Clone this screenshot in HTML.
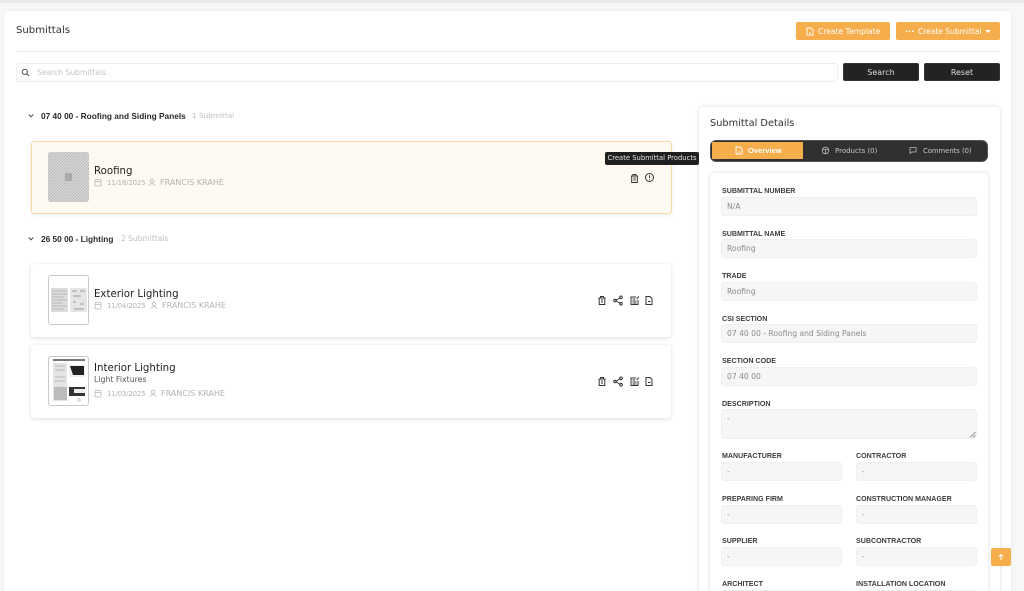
<!DOCTYPE html>
<html><head><meta charset="utf-8"><style>
*{box-sizing:border-box}
html{margin:0;padding:0;width:1024px;height:591px;overflow:hidden}
body{margin:0;padding:0;width:1024px;height:591px;overflow:hidden;background:#f6f7f7;position:relative;font-family:"DejaVu Sans","Liberation Sans",sans-serif;color:#222}
#root{position:absolute;left:0;top:0;width:1024px;height:591px;overflow:hidden;filter:blur(.25px)}
.a{position:absolute}
.t{position:absolute;white-space:nowrap;line-height:12px;height:12px}
.btn{position:absolute;background:#f6ad4b;border-radius:2px;height:18px;top:22px}
.dk{position:absolute;background:#232323;border-radius:2px;height:18px;top:63px;width:76px;color:#ddd;font-size:8px;line-height:18px;text-align:center;border:1px solid #333}
.card{position:absolute;left:31px;width:640px;height:73px;background:#fff;border-radius:3px;box-shadow:0 1px 5px rgba(0,0,0,.14)}
.th{position:absolute;left:48px;width:41px;height:50px;border:1px solid #c9c9c9;border-radius:3px;background:#fff;overflow:hidden}
.nm{font-size:10.2px;color:#222}
.mt{font-size:8px;color:#b4b4b4}
.dt{font-size:7px;color:#b4b4b4}
.hd{font-family:"Liberation Sans",sans-serif;font-size:8.3px;font-weight:bold;color:#2a2a2a}
.lb{font-family:"Liberation Sans",sans-serif;font-size:7.1px;font-weight:bold;color:#3d3d3d}
.in{position:absolute;background:#f5f6f6;border:1px solid #eef0f0;border-radius:3px;height:19px;width:256px;left:721px;font-size:7.6px;color:#8a8a8a;line-height:17px;padding-left:5px}
.h{width:121px}.r{left:856px}
svg{position:absolute;fill:none}
</style></head><body><div id="root">
<div class="a" style="left:0;top:0;width:1024px;height:3px;background:#e9eaea"></div>
<div class="a" style="left:4px;top:11px;width:1007px;height:580px;background:#fff;border-radius:4px 4px 0 0;box-shadow:0 0 4px rgba(0,0,0,.06)"></div>

<div class="t" style="left:16px;top:25px;font-size:10.1px;color:#333">Submittals</div>

<div class="btn" style="left:796px;width:94px"></div>
<svg class="a" style="left:806px;top:27px" width="8" height="9" viewBox="0 0 8 9" stroke="#fff" stroke-width=".9"><path d="M1 1h4l2 2v5H1zM3 6h2"/></svg>
<div class="t" style="left:818px;top:26px;font-size:7.6px;color:#fff">Create Template</div>
<div class="btn" style="left:896px;width:104px"></div>
<div class="t" style="left:905px;top:26px;font-size:8px;color:#fff;font-weight:bold">&middot;&middot;&middot;</div>
<div class="t" style="left:918px;top:26px;font-size:7.5px;color:#fff">Create Submittal</div>
<div class="a" style="left:985px;top:30px;border:3px solid transparent;border-top-color:#fff"></div>

<div class="a" style="left:16px;top:51px;width:984px;height:1px;background:#eeeeee"></div>

<div class="a" style="left:16px;top:63px;width:822px;height:19px;border:1px solid #eeeeee;border-radius:3px;background:#fff"></div>
<svg class="a" style="left:21px;top:68px" width="9" height="9" viewBox="0 0 9 9" stroke="#555" stroke-width="1"><circle cx="3.800" cy="3.800" r="2.600"/><path d="M5.800 5.800L8 8"/></svg>
<div class="t" style="left:37px;top:67px;font-size:7.6px;color:#c4c4c4">Search Submittals</div>
<div class="dk" style="left:843px">Search</div>
<div class="dk" style="left:924px">Reset</div>

<svg class="a" style="left:28px;top:113px" width="6" height="6" viewBox="0 0 6 6" stroke="#444" stroke-width="1"><path d="M.8 1.500L3 3.800l2.200-2.300"/></svg>
<div class="t hd" style="left:41px;top:110px">07 40 00 - Roofing and Siding Panels</div>
<div class="t" style="left:192px;top:110px;font-size:7.3px;color:#c0c0c0">1 Submittal</div>

<div class="card" style="top:141px;height:73px;width:641px;background:#fef9f1;border:1px solid #f9d9a6;box-shadow:0 1px 4px rgba(0,0,0,.08)"></div>
<div class="th" style="top:152px;background:#c9c9c9;border:0">
<svg width="41" height="50" style="left:0;top:0"><defs><pattern id="p" width="3" height="3" patternUnits="userSpaceOnUse"><rect width="3" height="3" fill="#d8d8d8"/><path d="M0 3L3 0" stroke="#b4b4b4" stroke-width=".8"/></pattern></defs><rect width="41" height="50" fill="url(#p)"/><rect x="17" y="21" width="7" height="8" fill="#aaa"/></svg></div>
<div class="t nm" style="left:94px;top:166px">Roofing</div>
<svg class="a" style="left:94px;top:178px" width="8" height="9" viewBox="0 0 8 9" stroke="#b8b8b8" stroke-width=".8"><rect x="1" y="1.500" width="6" height="6.500" rx="1"/><path d="M1 3.500h6"/></svg>
<div class="t dt" style="left:107px;top:177px;letter-spacing:-.2px">11/18/2025</div>
<svg class="a" style="left:148px;top:178px" width="8" height="9" viewBox="0 0 8 9" stroke="#b8b8b8" stroke-width=".8"><circle cx="4" cy="3" r="1.800"/><path d="M1 8c0-3 6-3 6 0"/></svg>
<div class="t mt" style="left:160px;top:177px">FRANCIS KRAHE</div>

<svg class="a" style="left:629px;top:173px" width="11" height="11" viewBox="0 0 11 11" stroke="#333" stroke-width="1"><path d="M2 3h7M4 3V1.500h3V3M2.700 3v6.500h5.600V3M4.300 5h2.400M4.300 7h2.400"/></svg>
<svg class="a" style="left:644px;top:172px" width="11" height="11" viewBox="0 0 11 11" stroke="#333" stroke-width="1"><circle cx="5.500" cy="5.500" r="4"/><path d="M5.500 3.200v2.800M5.500 7v.9"/></svg>

<div class="a" style="left:605px;top:152px;width:94px;height:13px;background:#1f1f1f;border-radius:2px;color:#e6e6e6;font-size:6.8px;line-height:13px;text-align:center;white-space:nowrap;z-index:3">Create Submittal Products</div>

<svg class="a" style="left:28px;top:236px" width="6" height="6" viewBox="0 0 6 6" stroke="#444" stroke-width="1"><path d="M.8 1.500L3 3.800l2.200-2.300"/></svg>
<div class="t hd" style="left:41px;top:233px">26 50 00 - Lighting</div>
<div class="t" style="left:121px;top:233px;font-size:7.5px;color:#c0c0c0">2 Submittals</div>

<div class="card" style="top:264px"></div>
<div class="th" style="top:275px">
<svg width="39" height="48" style="left:0;top:0"><rect x="2" y="12" width="17" height="24" fill="#dcdcdc"/><rect x="21" y="12" width="17" height="24" fill="#e6e6e6"/><path d="M3 15h15M3 18h15M3 21h12M3 24h15M3 27h10M3 30h14M3 33h12" stroke="#aaa" stroke-width=".7"/><path d="M23 15h5M31 15h5M24 20h8M24 26h3M31 28h4M25 33h10" stroke="#999" stroke-width="1"/></svg></div>
<div class="t nm" style="left:94px;top:289px">Exterior Lighting</div>
<svg class="a" style="left:94px;top:301px" width="8" height="9" viewBox="0 0 8 9" stroke="#b8b8b8" stroke-width=".8"><rect x="1" y="1.500" width="6" height="6.500" rx="1"/><path d="M1 3.500h6"/></svg>
<div class="t dt" style="left:107px;top:300px;letter-spacing:-.2px">11/04/2025</div>
<svg class="a" style="left:150px;top:301px" width="8" height="9" viewBox="0 0 8 9" stroke="#b8b8b8" stroke-width=".8"><circle cx="4" cy="3" r="1.800"/><path d="M1 8c0-3 6-3 6 0"/></svg>
<div class="t mt" style="left:162px;top:300px">FRANCIS KRAHE</div>

<div class="card" style="top:345px"></div>
<div class="th" style="top:356px">
<svg width="39" height="48" style="left:0;top:0"><rect x="4" y="2" width="32" height="2" fill="#777"/><rect x="4" y="6" width="14" height="38" fill="#e4e4e4"/><rect x="20" y="8" width="16" height="12" fill="#eee"/><path d="M21 9h14v9H24z" fill="#222"/><rect x="5" y="30" width="13" height="13" fill="#bbb"/><rect x="20" y="30" width="16" height="9" fill="#333"/><path d="M6 9h10M6 13h10M6 20h10M6 24h10" stroke="#aaa" stroke-width=".8"/><rect x="25" y="32" width="11" height="4" fill="#eee"/><circle cx="30" cy="43" r="2" fill="#ddd"/></svg></div>
<div class="t nm" style="left:94px;top:363px">Interior Lighting</div>
<div class="t" style="left:94px;top:374px;font-size:7.8px;color:#555">Light Fixtures</div>
<svg class="a" style="left:94px;top:389px" width="8" height="9" viewBox="0 0 8 9" stroke="#b8b8b8" stroke-width=".8"><rect x="1" y="1.500" width="6" height="6.500" rx="1"/><path d="M1 3.500h6"/></svg>
<div class="t dt" style="left:107px;top:388px;letter-spacing:-.2px">11/03/2025</div>
<svg class="a" style="left:149px;top:389px" width="8" height="9" viewBox="0 0 8 9" stroke="#b8b8b8" stroke-width=".8"><circle cx="4" cy="3" r="1.800"/><path d="M1 8c0-3 6-3 6 0"/></svg>
<div class="t mt" style="left:161px;top:388px">FRANCIS KRAHE</div>

<svg class="a" style="left:597px;top:295px" width="60" height="11" viewBox="0 0 60 11" stroke="#333" stroke-width="1"><path d="M1.500 3h7M3.500 3V1.500h3V3M2.200 3v6.500h5.600V3M4 5h2M4 7h2"/><path d="M18.500 5.500l5-3M18.500 5.500l5 3"/><circle cx="18" cy="5.500" r="1.300"/><circle cx="24" cy="2.300" r="1.300"/><circle cx="24" cy="8.700" r="1.300"/><path d="M39 2h-5v7.500h7V5M35.500 4h2.500M35.500 6h4M35.500 8h4M39.500 4l2.500-2.500"/><path d="M49 1.500h4l2 2v6h-6zM51 6.500h2.500"/></svg>
<svg class="a" style="left:597px;top:376px" width="60" height="11" viewBox="0 0 60 11" stroke="#333" stroke-width="1"><path d="M1.500 3h7M3.500 3V1.500h3V3M2.200 3v6.500h5.600V3M4 5h2M4 7h2"/><path d="M18.500 5.500l5-3M18.500 5.500l5 3"/><circle cx="18" cy="5.500" r="1.300"/><circle cx="24" cy="2.300" r="1.300"/><circle cx="24" cy="8.700" r="1.300"/><path d="M39 2h-5v7.500h7V5M35.500 4h2.500M35.500 6h4M35.500 8h4M39.500 4l2.500-2.500"/><path d="M49 1.500h4l2 2v6h-6zM51 6.500h2.500"/></svg>

<div class="a" style="left:699px;top:107px;width:301px;height:490px;background:#fff;border-radius:4px;box-shadow:0 0 4px rgba(0,0,0,.16)"></div>
<div class="t" style="left:710px;top:117px;font-size:9.800px;color:#333;line-height:13px">Submittal Details</div>
<div class="a" style="left:710px;top:140px;width:278px;height:22px;background:#303030;border:1px solid #555;border-radius:6px"></div>
<div class="a" style="left:712px;top:142px;width:91px;height:17px;background:#f6ad4b"></div>
<svg class="a" style="left:735px;top:146px" width="8" height="9" viewBox="0 0 8 9" stroke="#fff" stroke-width=".9"><path d="M1 1h4l2 2v5H1zM3 6h2"/></svg>
<div class="t" style="left:748px;top:145px;font-family:'Liberation Sans',sans-serif;font-size:7.6px;font-weight:bold;color:#fff">Overview</div>
<svg class="a" style="left:821px;top:146px" width="9" height="9" viewBox="0 0 9 9" stroke="#bbb" stroke-width=".8"><circle cx="4.500" cy="4.500" r="3.300"/><path d="M1.500 3.500h6M4.500 3.500v4"/></svg>
<div class="t" style="left:835px;top:145px;font-size:7px;color:#c8c8c8">Products (0)</div>
<svg class="a" style="left:909px;top:146px" width="8" height="9" viewBox="0 0 8 9" stroke="#bbb" stroke-width=".8"><path d="M1 1.500h6v4.500H2.500L1 7.500z"/></svg>
<div class="t" style="left:923px;top:145px;font-size:6.800px;color:#c8c8c8">Comments (0)</div>

<div class="a" style="left:710px;top:173px;width:278px;height:430px;background:#fff;border-radius:4px;box-shadow:0 0 4px rgba(0,0,0,.16)"></div>

<div class="t lb" style="left:722px;top:185px">SUBMITTAL NUMBER</div><div class="in" style="top:197px">N/A</div>
<div class="t lb" style="left:722px;top:228px">SUBMITTAL NAME</div><div class="in" style="top:239px">Roofing</div>
<div class="t lb" style="left:722px;top:270px">TRADE</div><div class="in" style="top:282px">Roofing</div>
<div class="t lb" style="left:722px;top:313px">CSI SECTION</div><div class="in" style="top:324px">07 40 00 - Roofing and Siding Panels</div>
<div class="t lb" style="left:722px;top:355px">SECTION CODE</div><div class="in" style="top:367px">07 40 00</div>
<div class="t lb" style="left:722px;top:398px">DESCRIPTION</div><div class="in" style="top:409px;height:30px">-</div>
<svg class="a" style="left:969px;top:431px" width="7" height="7" stroke="#777" stroke-width=".8"><path d="M1 6.500L6.500 1M4 6.500L6.500 4"/></svg>
<div class="t lb" style="left:722px;top:450px">MANUFACTURER</div><div class="in h" style="top:462px">-</div>
<div class="t lb" style="left:856px;top:450px">CONTRACTOR</div><div class="in h r" style="top:462px">-</div>
<div class="t lb" style="left:722px;top:493px">PREPARING FIRM</div><div class="in h" style="top:505px">-</div>
<div class="t lb" style="left:856px;top:493px">CONSTRUCTION MANAGER</div><div class="in h r" style="top:505px">-</div>
<div class="t lb" style="left:722px;top:535px">SUPPLIER</div><div class="in h" style="top:547px">-</div>
<div class="t lb" style="left:856px;top:535px">SUBCONTRACTOR</div><div class="in h r" style="top:547px">-</div>
<div class="t lb" style="left:722px;top:578px">ARCHITECT</div><div class="in h" style="top:590px">-</div>
<div class="t lb" style="left:856px;top:578px">INSTALLATION LOCATION</div><div class="in h r" style="top:590px">-</div>

<div class="a" style="left:991px;top:548px;width:20px;height:18px;background:#f6ad4b;border-radius:2px"></div>
<svg class="a" style="left:997px;top:553px" width="8" height="8" viewBox="0 0 8 8" stroke="#fff" stroke-width="1"><path d="M4 7V1.500M2 3.500l2-2 2 2"/></svg>
</div></body></html>
